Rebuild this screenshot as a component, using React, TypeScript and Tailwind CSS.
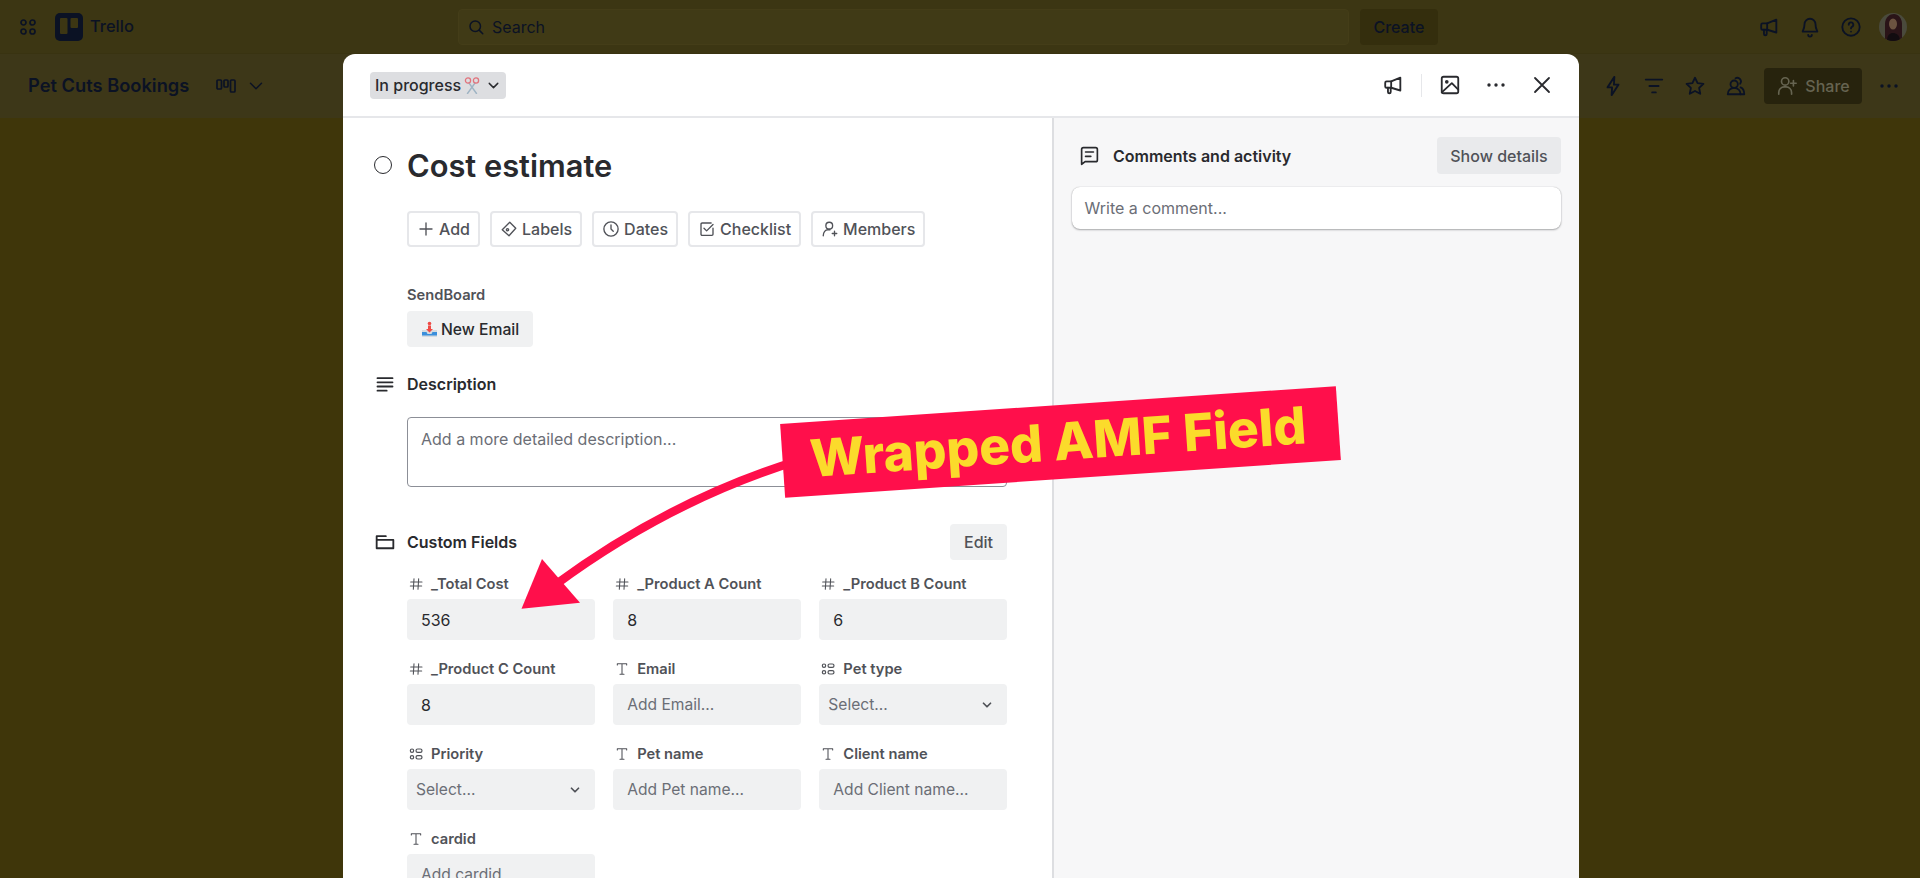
import React from "react";

const Ic = ({ s = 20, w = 1.8, className = "", children }: { s?: number; w?: number; className?: string; children: React.ReactNode }) => (
  <svg width={s} height={s} viewBox="0 0 24 24" fill="none" stroke="currentColor" strokeWidth={w} strokeLinecap="round" strokeLinejoin="round" className={`shrink-0 ${className}`}>
    {children}
  </svg>
);

const Megaphone = ({ s = 22 }: { s?: number }) => (
  <Ic s={s} w={2}>
    <path d="M20 4v14L10 15H5a1.500 1.500 0 0 1-1.500-1.500v-4A1.500 1.500 0 0 1 5 8h5z" />
    <path d="M6.500 15v4.500a1.500 1.500 0 0 0 3 0V15" />
    <path d="M10 8v7" />
  </Ic>
);
const Dots = () => (
  <svg width="20" height="6" viewBox="0 0 20 6" className="shrink-0" fill="currentColor">
    <circle cx="3" cy="3" r="1.700" />
    <circle cx="10" cy="3" r="1.700" />
    <circle cx="17" cy="3" r="1.700" />
  </svg>
);
const Chevron = ({ s = 18, w = 2 }: { s?: number; w?: number }) => (
  <Ic s={s} w={w}><path d="M6 9l6 6 6-6" /></Ic>
);
const Hash = () => (
  <Ic s={16} w={1.6}><path d="M9 4L8 20M16 4l-1 16M4 9h17M3.500 15h17" /></Ic>
);
const TIcon = () => (
  <Ic s={16} w={1.6}><path d="M5 6V4h14v2M12 4v16M9 20h6" /></Ic>
);
const SelIcon = () => (
  <Ic s={16} w={1.8}>
    <circle cx="6" cy="7" r="2.500" />
    <circle cx="6" cy="17" r="2.500" />
    <rect x="12" y="4.500" width="9" height="5" rx="2.500" />
    <rect x="12" y="14.500" width="9" height="5" rx="2.500" />
  </Ic>
);
const Scissors = () => (
  <svg width="16" height="17" viewBox="0 0 16 17" fill="none" className="shrink-0">
    <path d="M5 6l7.500 10.500M11 6L3.500 16.500" stroke="#9fb4c4" strokeWidth="1.400" strokeLinecap="round" />
    <circle cx="4" cy="3.500" r="2.600" stroke="#e2737c" strokeWidth="1.300" />
    <circle cx="12" cy="3.500" r="2.600" stroke="#e2737c" strokeWidth="1.300" />
  </svg>
);
const Inbox = () => (
  <svg width="17" height="17" viewBox="0 0 17 17" className="shrink-0">
    <path d="M1 9h15v7H1z" fill="#d5dbe0" />
    <path d="M1 11h4.500l1 2h4l1-2H16v3.500H1z" fill="#3a8fdc" />
    <path d="M7 4.500h3V8h2l-3.500 3.500L5 8h2z" fill="#ef4a45" />
    <circle cx="8.500" cy="2.500" r="1.800" fill="#ef4a45" />
  </svg>
);

const ActionBtn = ({ icon, label }: { icon: React.ReactNode; label: string }) => (
  <div className="flex h-9 items-center gap-[4px] rounded-[4px] border-2 border-[#e6e7ea] bg-white px-[8px] text-base font-medium text-[#505258]">
    {icon}
    <span>{label}</span>
  </div>
);

type F = { kind: "num" | "text" | "sel"; label: string; value?: string; ph?: string };
const fields: F[] = [
  { kind: "num", label: "_Total Cost", value: "536" },
  { kind: "num", label: "_Product A Count", value: "8" },
  { kind: "num", label: "_Product B Count", value: "6" },
  { kind: "num", label: "_Product C Count", value: "8" },
  { kind: "text", label: "Email", ph: "Add Email..." },
  { kind: "sel", label: "Pet type", ph: "Select..." },
  { kind: "sel", label: "Priority", ph: "Select..." },
  { kind: "text", label: "Pet name", ph: "Add Pet name..." },
  { kind: "text", label: "Client name", ph: "Add Client name..." },
  { kind: "text", label: "cardid", ph: "Add cardid..." },
];

const Field = ({ f }: { f: F }) => (
  <div className="flex flex-col gap-[5px]">
    <div className="flex h-5 items-center gap-[7px] pl-[1px] text-[14.700px] font-semibold text-[#505258]">
      {f.kind === "num" ? <Hash /> : f.kind === "text" ? <TIcon /> : <SelIcon />}
      <span>{f.label}</span>
    </div>
    <div className={`flex h-[41px] items-center justify-between rounded-[4px] bg-[#f0f1f2] ${f.kind === "sel" ? "pl-[9px] pr-[13px]" : "px-[14px]"} text-[15.600px]`}>
      <span className={f.value ? "text-base text-[#292a2e]" : "text-[#6b6e76]"}>{f.value ?? f.ph}</span>
      {f.kind === "sel" && <span className="text-[#505258]"><Chevron s={14} w={3} /></span>}
    </div>
  </div>
);

const SectionHead = ({ icon, title }: { icon: React.ReactNode; title: string }) => (
  <div className="-ml-[32px] flex items-center gap-[12px] text-[#292a2e]">
    <span className="flex w-5 justify-center">{icon}</span>
    <span className="text-base font-semibold">{title}</span>
  </div>
);

export default function App() {
  return (
    <div className="relative flex h-[878px] w-full flex-col overflow-hidden bg-[#3f360a] [font-family:Inter,'Liberation_Sans',sans-serif]">
      {/* top bar */}
      <div className="flex h-[54px] shrink-0 items-center border-b border-[#393311] bg-[#3c3613] pl-[20px] pr-[13px] text-[#0b1224]">
        <svg width="16" height="16" viewBox="0 0 16 16" fill="none" stroke="currentColor" strokeWidth="1.700" className="shrink-0">
          <circle cx="3.500" cy="3.500" r="2.500" />
          <circle cx="12.500" cy="3.500" r="2.500" />
          <circle cx="3.500" cy="12.500" r="2.500" />
          <circle cx="12.500" cy="12.500" r="2.500" />
        </svg>
        <svg width="28" height="28" viewBox="0 0 28 28" className="ml-[19px] shrink-0">
          <rect width="28" height="28" rx="5" fill="#0b1224" />
          <rect x="5" y="5" width="7.500" height="16" rx="1" fill="#3c3613" />
          <rect x="15.500" y="5" width="7.500" height="10" rx="1" fill="#3c3613" />
        </svg>
        <span className="ml-[7px] text-[16.500px] font-medium">Trello</span>
        <div className="ml-[324px] flex h-9 w-[891px] items-center gap-[7px] rounded-[4px] border border-[#443d18] bg-[#403a16] pl-[8px]">
          <Ic s={18} w={2}><circle cx="11" cy="11" r="7" /><path d="M16.500 16.500L21 21" /></Ic>
          <span className="text-base">Search</span>
        </div>
        <div className="ml-[11px] flex h-9 w-[78px] items-center justify-center rounded-[4px] bg-[#342e0d] text-base font-medium">Create</div>
        <div className="ml-auto flex items-center gap-[19px]">
          <Megaphone />
          <Ic s={22} w={2}><path d="M6 9a6 6 0 0 1 12 0c0 5 2 7 2 8H4c0-1 2-3 2-8z" /><path d="M10 20.500a2 2 0 0 0 4 0" /></Ic>
          <Ic s={22} w={2}><circle cx="12" cy="12" r="9.500" /><path d="M9.500 9.500a2.500 2.500 0 1 1 3.500 2.300c-.7.300-1 .800-1 1.700" /><path d="M12 17v.010" /></Ic>
          <svg width="28" height="28" viewBox="0 0 28 28" className="-ml-[2px] shrink-0">
            <defs><clipPath id="av"><circle cx="14" cy="14" r="14" /></clipPath></defs>
            <g clipPath="url(#av)">
              <rect width="28" height="28" fill="#4a4a3c" />
              <path d="M6 28V11C6 4 11 1 15 1s8 4 8 10v17z" fill="#2a1418" />
              <ellipse cx="14" cy="11" rx="4" ry="5.500" fill="#6b5340" />
              <path d="M8 28c0-6 3-8 6-8s7 2 7 8z" fill="#120c10" />
            </g>
          </svg>
        </div>
      </div>

      {/* board bar */}
      <div className="flex h-[64px] shrink-0 items-center bg-[#3d3718] pl-[28px] pr-[21px] text-[#0b1224]">
        <span className="text-[18.300px] font-semibold">Pet Cuts Bookings</span>
        <svg width="20" height="14" viewBox="0 0 20 14" fill="none" stroke="currentColor" strokeWidth="1.700" className="ml-[27px] shrink-0">
          <rect x="1" y="1" width="4.500" height="9" rx="1" />
          <rect x="8" y="1" width="4" height="7" rx="1" />
          <rect x="14.500" y="1" width="4.500" height="12" rx="1" />
        </svg>
        <span className="ml-[9px]"><Chevron s={22} w={1.600} /></span>
        <div className="ml-auto flex items-center">
          <div className="flex items-center gap-[19px]">
            <Ic s={22} w={2}><path d="M13.500 2L6 13.500h5L10.500 22 18 10.500h-5z" /></Ic>
            <Ic s={22} w={2}><path d="M3 5h18M7 12h10M10 19h4" /></Ic>
            <Ic s={22} w={2}><path d="M12 3l2.800 5.900 6.400.800-4.700 4.400 1.200 6.400L12 17.400l-5.700 3.100 1.200-6.400-4.700-4.400 6.400-.800z" /></Ic>
            <Ic s={22} w={2}><circle cx="10" cy="10" r="4" /><path d="M3 21c0-4 3-7 7-7s7 3 7 7z" /><path d="M11.500 3.500a4 4 0 0 1 5 6" /><path d="M17 13.500c2.500 1 4 3.500 4 7.500h-4" /></Ic>
          </div>
          <div className="ml-[17px] flex h-9 w-[98px] items-center justify-center gap-[7px] rounded-[4px] bg-[#27230d] text-base font-medium text-[#666451]">
            <Ic s={22} w={1.800}><circle cx="10" cy="7" r="4" /><path d="M3 21v-2a6 6 0 0 1 6-6h2a6 6 0 0 1 6 6v2M19 6v6M16 9h6" /></Ic>
            <span>Share</span>
          </div>
          <span className="ml-[17px]"><Dots /></span>
        </div>
      </div>

      {/* board */}
      <div className="flex-1 bg-[#3f360a]" />

      {/* modal */}
      <div className="absolute left-[343px] top-[54px] flex h-[900px] w-[1236px] flex-col rounded-t-[12px] bg-white text-[#292a2e]">
        <div className="flex h-[64px] shrink-0 items-center border-b-2 border-[#e6e7ea] pl-[27px] pr-[25px]">
          <div className="flex h-[27px] items-center gap-[3px] rounded-[4px] bg-[#dddee1] pl-[5px] pr-[4px] text-base font-medium text-[#292a2e]">
            <span>In progress</span>
            <Scissors />
            <span className="ml-[2px]"><Chevron s={17} /></span>
          </div>
          <div className="ml-auto flex items-center text-[#292a2e]">
            <Megaphone />
            <div className="mx-[17px] h-[23px] w-px bg-[#e6e7ea]" />
            <Ic s={22} w={2}><rect x="3" y="3" width="18" height="18" rx="2" /><circle cx="8.500" cy="8.500" r="1" fill="currentColor" /><path d="M3 20l11-10 7 7" /></Ic>
            <span className="ml-[25px]"><Dots /></span>
            <span className="ml-[24px]"><Ic s={24} w={1.800}><path d="M5 5l14 14M19 5L5 19" /></Ic></span>
          </div>
        </div>

        <div className="flex flex-1">
          {/* left */}
          <div className="w-[711px] shrink-0 border-r-2 border-[#dddee1] pl-[64px]">
            <div className="w-[600px]">
              <div className="relative mt-[30px] flex h-9 items-center">
                <div className="absolute -left-[33px] top-[8px] size-[18px] rounded-full border-[1.500px] border-[#292a2e]" />
                <h1 className="text-[30.800px] font-semibold leading-9 text-[#292a2e]">Cost estimate</h1>
              </div>
              <div className="mt-[27px] flex gap-[10px]">
                <ActionBtn label="Add" icon={<Ic s={18} w={1.800}><path d="M12 4v16M4 12h16" /></Ic>} />
                <ActionBtn label="Labels" icon={<Ic s={18} w={1.800}><path d="M13 3l8 8-9 10-9-8z" /><circle cx="10" cy="13" r="1.500" /></Ic>} />
                <ActionBtn label="Dates" icon={<Ic s={18} w={1.800}><circle cx="12" cy="12" r="9.500" /><path d="M12 6.500V12l3 3" /></Ic>} />
                <ActionBtn label="Checklist" icon={<Ic s={18} w={1.800}><path d="M20 11v8a1.500 1.500 0 0 1-1.500 1.500h-13A1.500 1.500 0 0 1 4 19V5.500A1.500 1.500 0 0 1 5.500 4h12" /><path d="M8 11l3.500 3.500L20 6" /></Ic>} />
                <ActionBtn label="Members" icon={<Ic s={18} w={1.800}><circle cx="11" cy="7.500" r="4.500" /><path d="M3 21c0-5 3-8 6-8h3M18 15v6M15 18h6" /></Ic>} />
              </div>

              <div className="mt-[38px] h-5 text-[14.700px] font-semibold leading-5 text-[#505258]">SendBoard</div>
              <div className="mt-[6px] flex h-9 w-[126px] items-center gap-[3px] rounded-[4px] bg-[#f0f1f2] pl-[14px] pt-[1px] text-[15.700px] font-medium text-[#292a2e]">
                <Inbox />
                <span>New Email</span>
              </div>

              <div className="mt-[25px] flex h-6 items-center">
                <SectionHead title="Description" icon={<Ic s={20} w={2.200}><path d="M3 5h18M3 10h18M3 15h18M3 20h11" /></Ic>} />
              </div>
              <div className="mt-[21px] h-[70px] rounded-[4px] border-[1.500px] border-[#8c8f97] px-[13px] pt-[9px] text-base text-[#6b6e76]">
                Add a more detailed description...
              </div>

              <div className="mt-[37px] flex h-9 items-center justify-between">
                <SectionHead title="Custom Fields" icon={<Ic s={20} w={2.200}><path d="M2 5h11M2 5v14.500h20V9.500H2" /></Ic>} />
                <div className="flex h-9 w-[57px] items-center justify-center rounded-[4px] bg-[#f0f1f2] text-base font-medium text-[#505258]">Edit</div>
              </div>

              <div className="mt-[14px] grid grid-cols-3 gap-x-[18.500px] gap-y-[19px]">
                {fields.map((f) => <Field key={f.label} f={f} />)}
              </div>
            </div>
          </div>

          {/* right */}
          <div className="flex-1 bg-[#f7f7f8] pl-[17.500px] pr-[18px] pt-[19px]">
            <div className="flex h-[37px] items-center justify-between">
              <div className="flex items-center gap-[13px] pl-[7.500px] text-[#292a2e]">
                <Ic s={21} w={1.900}><path d="M3 5a2 2 0 0 1 2-2h14a2 2 0 0 1 2 2v12a2 2 0 0 1-2 2H7l-4 3z" /><path d="M7.500 8h9M7.500 13h6" /></Ic>
                <span className="text-base font-semibold">Comments and activity</span>
              </div>
              <div className="flex h-[37px] w-[124px] items-center justify-center rounded-[4px] bg-[#e9eaec] text-base font-medium text-[#505258]">Show details</div>
            </div>
            <div className="mt-[13px] flex h-[42px] items-center rounded-[8px] bg-white px-[13px] text-base text-[#6b6e76] shadow-[0_1px_2px_rgba(30,31,33,0.35),0_0_1px_rgba(30,31,33,0.3)]">
              Write a comment...
            </div>
          </div>
        </div>
      </div>

      {/* annotation */}
      <svg width="1920" height="878" viewBox="0 0 1920 878" fill="none" className="pointer-events-none absolute left-0 top-0">
        <path d="M800 460Q670 500 555 585" stroke="#ff0f4b" strokeWidth="8.500" />
        <path d="M521.500 608.700L542 559L580 602.700z" fill="#ff0f4b" />
      </svg>
      <div className="absolute left-[782px] top-[405px] flex h-[74px] w-[557px] -rotate-[3.900deg] items-center justify-center bg-[#ff0f4b] pr-[5px] text-[51.500px] font-extrabold leading-none text-[#fbdb2b]">
        Wrapped AMF Field
      </div>
    </div>
  );
}
